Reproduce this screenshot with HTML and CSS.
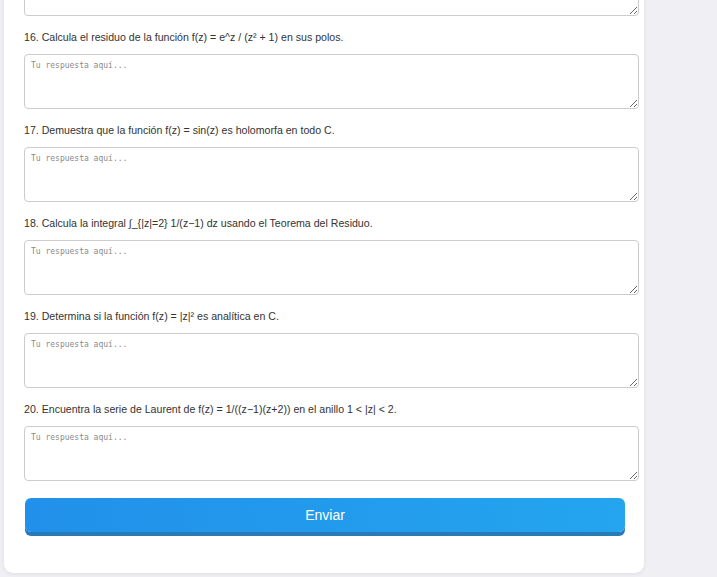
FILE: index.html
```html
<!DOCTYPE html>
<html lang="es">
<head>
<meta charset="utf-8">
<title>Ejercicios</title>
<link rel="stylesheet" href="styles.css">
</head>
<body>
<div class="card">
  <div class="q">
    <textarea class="answer" placeholder="" aria-label="Respuesta 15"></textarea>
  </div>
  <div class="q">
    <label class="q-label">16. Calcula el residuo de la función f(z) = e^z / (z² + 1) en sus polos.</label>
    <textarea class="answer" placeholder="Tu respuesta aquí..."></textarea>
  </div>
  <div class="q">
    <label class="q-label">17. Demuestra que la función f(z) = sin(z) es holomorfa en todo C.</label>
    <textarea class="answer" placeholder="Tu respuesta aquí..."></textarea>
  </div>
  <div class="q">
    <label class="q-label">18. Calcula la integral ∫_{|z|=2} 1/(z−1) dz usando el Teorema del Residuo.</label>
    <textarea class="answer" placeholder="Tu respuesta aquí..."></textarea>
  </div>
  <div class="q">
    <label class="q-label">19. Determina si la función f(z) = |z|² es analítica en C.</label>
    <textarea class="answer" placeholder="Tu respuesta aquí..."></textarea>
  </div>
  <div class="q">
    <label class="q-label">20. Encuentra la serie de Laurent de f(z) = 1/((z−1)(z+2)) en el anillo 1 &lt; |z| &lt; 2.</label>
    <textarea class="answer" placeholder="Tu respuesta aquí..."></textarea>
  </div>
  <button class="submit" type="button">Enviar</button>
</div>
</body>
</html>
```

FILE: styles.css
```css
html, body {
  margin: 0;
  padding: 0;
}
body {
  background: #efeff4;
  font-family: "Liberation Sans", Arial, sans-serif;
  height: 577px;
  overflow: hidden;
}
.card {
  width: 600px;
  margin: -59px 0 0 4px;
  padding: 20px 20px 20px;
  background: #ffffff;
  border-radius: 9px;
  box-shadow: 0 1px 4px rgba(0, 0, 0, 0.08);
}
.q {
  margin-bottom: 13px;
}
.q-label {
  display: block;
  font-size: 10.6px;
  line-height: 16px;
  color: #333333;
  margin-bottom: 9px;
}
.answer {
  display: block;
  box-sizing: border-box;
  width: 615px;
  height: 55px;
  padding: 6px;
  border: 1px solid #cccccc;
  border-radius: 4px;
  font-family: "DejaVu Sans Mono", monospace;
  font-size: 8px;
  color: #333;
  background: #fff;
  resize: vertical;
}
.answer::placeholder {
  color: #8a8a8a;
}
.submit {
  display: block;
  width: 600px;
  height: 34px;
  margin: 17px 0 21px 1px;
  border: none;
  border-radius: 6px;
  background: linear-gradient(90deg, #2190ea 0%, #24a5ee 100%);
  box-shadow: 0 4px 0 #2b7ab8;
  color: #ffffff;
  font-family: "Liberation Sans", Arial, sans-serif;
  font-size: 14px;
  cursor: pointer;
}
```
